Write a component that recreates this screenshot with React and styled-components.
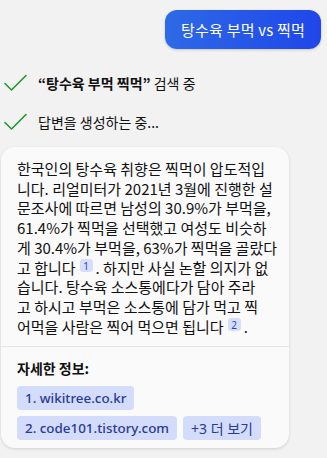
import styled, { createGlobalStyle } from "styled-components"

const GlobalStyle = createGlobalStyle`
    body {
        margin: 0;
        background: #f2f2f2;
        font-family: "Noto Sans CJK KR", "Noto Sans", sans-serif;
    }
`

const Page = styled.div`
    width: 327px;
    height: 458px;
    padding: 10px 6px 0 1px;
    box-sizing: border-box;
    display: flex;
    flex-direction: column;
    overflow: hidden;
`

const UserRow = styled.div`
    display: flex;
    justify-content: flex-end;
`

const UserBubble = styled.div`
    padding: 0 16px;
    height: 39px;
    display: flex;
    align-items: center;
    border-radius: 12px;
    background: linear-gradient(90deg, #2e6ae6 0%, #1f46ea 100%);
    box-shadow: 0 1px 3px rgba(0, 0, 0, 0.18);
    color: #fff;
    font-size: 15px;
    letter-spacing: 0.2px;
`

const StatusList = styled.div`
    display: flex;
    flex-direction: column;
    gap: 16px;
    margin-top: 22px;
    padding-left: 3px;
`

const StatusRow = styled.div`
    display: flex;
    align-items: center;
    gap: 11px;
    height: 23px;
    font-size: 14px;
    color: #111;
`

const Strong = styled.span`
    font-weight: 700;
`

const Card = styled.div`
    margin-top: 14px;
    width: 288px;
    background: #fafafa;
    border-radius: 14px;
    box-shadow: 0 1px 3px rgba(0, 0, 0, 0.14);
    overflow: hidden;
`

const Body = styled.div`
    padding: 12px 16px 10px 16px;
    font-size: 15px;
    line-height: 19.7px;
    color: #111;
    white-space: nowrap;
`

const Ref = styled.span`
    display: inline-flex;
    align-items: center;
    justify-content: center;
    width: 13px;
    height: 13px;
    margin: 0 3px 0 4px;
    border-radius: 3px;
    background: #d5defb;
    color: #3146a8;
    font-family: "Noto Sans", sans-serif;
    font-size: 10px;
    line-height: 1;
    vertical-align: 4px;
`

const Footer = styled.div`
    border-top: 1px solid #e4e4e4;
    padding: 12px 16px 8px 16px;
`

const FooterTitle = styled.div`
    font-size: 14px;
    line-height: 18px;
    font-weight: 700;
    color: #111;
    margin-bottom: 9px;
`

const Chips = styled.div`
    display: flex;
    flex-wrap: wrap;
    gap: 6px 6px;
    width: 256px;
`

const Chip = styled.span`
    height: 24px;
    display: inline-flex;
    align-items: center;
    padding: 0 8px;
    border-radius: 4px;
    background: #d3dcfa;
    color: #2a3a92;
    font-family: "Noto Sans", "Noto Sans CJK KR", sans-serif;
    font-size: ${(p) => (p.$plain ? "14px" : "13.4px")};
    font-weight: ${(p) => (p.$plain ? 400 : 500)};
`

const Check = () => (
    <svg width="23" height="18" viewBox="0 0 23 18" fill="none">
        <path d="M1 9.5 L7.5 16 L22 1.5" stroke="#1f9a2e" strokeWidth="1.6" strokeLinecap="round" strokeLinejoin="round" />
    </svg>
)

export default function App() {
    return (
        <>
            <GlobalStyle />
            <Page>
                <UserRow>
                    <UserBubble>탕수육 부먹 vs 찍먹</UserBubble>
                </UserRow>
                <StatusList>
                    <StatusRow>
                        <Check />
                        <span><Strong>“탕수육 부먹 찍먹”</Strong> 검색 중</span>
                    </StatusRow>
                    <StatusRow>
                        <Check />
                        <span>답변을 생성하는 중...</span>
                    </StatusRow>
                </StatusList>
                <Card>
                    <Body>
                        한국인의 탕수육 취향은 찍먹이 압도적입<br />
                        니다. 리얼미터가 2021년 3월에 진행한 설<br />
                        문조사에 따르면 남성의 30.9%가 부먹을,<br />
                        61.4%가 찍먹을 선택했고 여성도 비슷하<br />
                        게 30.4%가 부먹을, 63%가 찍먹을 골랐다<br />
                        고 합니다<Ref>1</Ref>. 하지만 사실 논할 의지가 없<br />
                        습니다. 탕수육 소스통에다가 담아 주라<br />
                        고 하시고 부먹은 소스통에 담가 먹고 찍<br />
                        어먹을 사람은 찍어 먹으면 됩니다<Ref>2</Ref>.
                    </Body>
                    <Footer>
                        <FooterTitle>자세한 정보:</FooterTitle>
                        <Chips>
                            <Chip>1. wikitree.co.kr</Chip>
                            <Chip>2. code101.tistory.com</Chip>
                            <Chip $plain>+3 더 보기</Chip>
                        </Chips>
                    </Footer>
                </Card>
            </Page>
        </>
    )
}
